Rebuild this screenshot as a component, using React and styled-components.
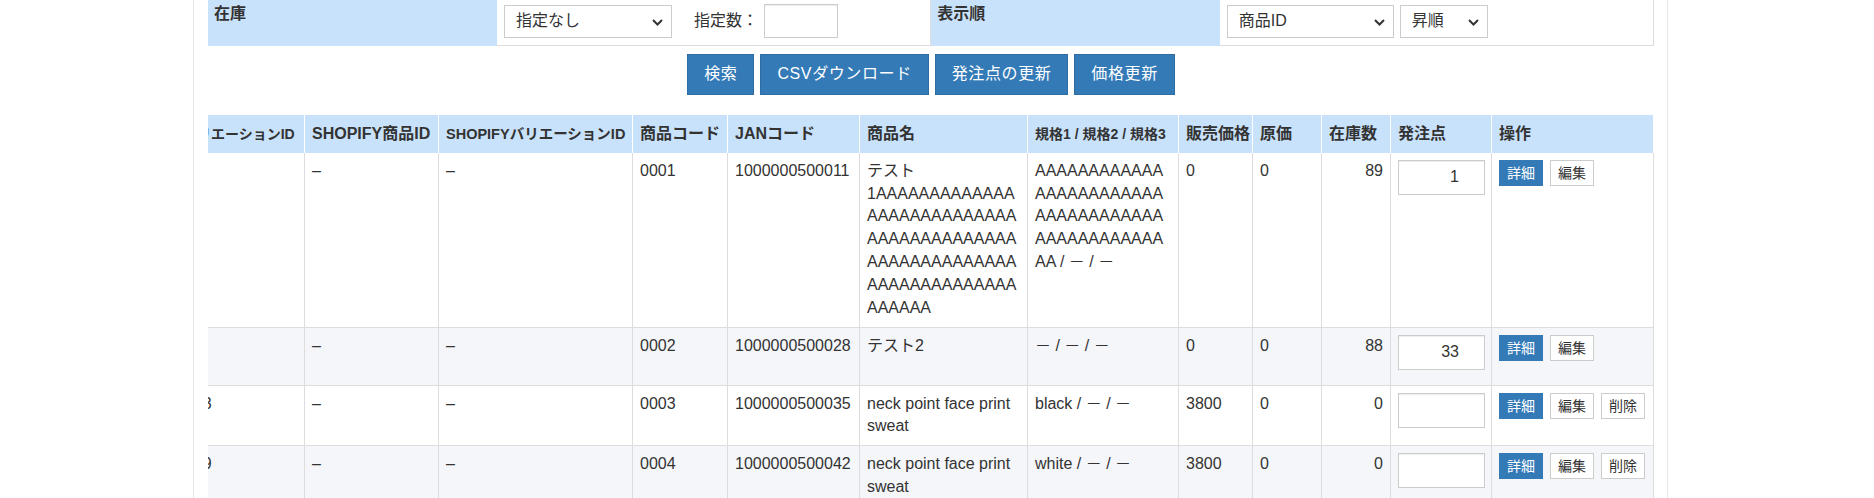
import React, { useLayoutEffect, useRef } from 'react';
import styled, { createGlobalStyle } from 'styled-components';

const GlobalStyle = createGlobalStyle`
	* { box-sizing: border-box; }
	html, body { margin: 0; padding: 0; background: #fff; }
	body {
		font-family: "Liberation Sans", Arial, "Noto Sans CJK JP", sans-serif;
		font-size: 16px;
		line-height: 1.42857;
		color: #333;
	}
`;

const Page = styled.div`
	width: 1475px;
	min-height: 520px;
	margin: -4px 0 0 193px;
	padding: 0 13px 40px 14px;
	border-left: 1px solid #e7e7e7;
	border-right: 1px solid #e7e7e7;
`;

const SearchTable = styled.table`
	width: 100%;
	table-layout: fixed;
	border-collapse: collapse;
`;

const SearchHead = styled.th`
	width: 20%;
	padding: 7px 6px;
	background: #c9e2fb;
	text-align: left;
	vertical-align: top;
	font-weight: bold;
`;

const SearchCell = styled.td`
	width: 30%;
	padding: 8px 7px 7px;
	border-right: 1px solid #ddd;
	border-bottom: 1px solid #ddd;
`;

const Field = styled.div`
	display: flex;
	align-items: center;
	gap: 6px;
`;

const SelectWrap = styled.span`
	position: relative;
	display: inline-block;
	width: ${p => p.$width}px;
	height: 33px;
`;

const Select = styled.select`
	appearance: none;
	width: 100%;
	height: 100%;
	padding: 0 28px 0 11px;
	border: 1px solid #ccc;
	border-radius: 0;
	background: #fff;
	color: #333;
	font: inherit;
`;

const Chevron = styled.svg`
	position: absolute;
	top: 14px;
	right: 9px;
	pointer-events: none;
`;

const Label = styled.span`
	margin-left: 16px;
	white-space: nowrap;
`;

const TextInput = styled.input`
	width: ${p => p.$width}px;
	height: 34px;
	padding: 0 6px;
	border: 1px solid #ccc;
	box-shadow: inset 0 1px 1px rgba(0, 0, 0, .075);
	font: inherit;
	color: #333;
	text-align: ${p => p.$align || 'left'};
`;

const Actions = styled.div`
	display: flex;
	justify-content: center;
	gap: 6px;
	margin: 8px 0 20px;
`;

const Button = styled.button`
	padding: 8px 16px;
	border: 1px solid #2e6da4;
	border-radius: 0;
	background: #337ab7;
	color: #fff;
	font: inherit;
	line-height: 1.42857;
	letter-spacing: 0.6px;
	white-space: nowrap;
`;

const Scroller = styled.div`
	width: 100%;
	overflow: hidden;
`;

const DataTable = styled.table`
	width: ${p => p.$width}px;
	table-layout: fixed;
	border-collapse: collapse;
`;

const Th = styled.th`
	padding: 8px 7px 7px ${p => p.$indent || 7}px;
	background: #c9e2fb;
	border-left: 1px solid #fff;
	border-right: 1px solid #fff;
	text-align: left;
	font-weight: bold;
	font-size: ${p => p.$size || 16}px;
	line-height: ${p => 22.86 / (p.$size || 16)};
	white-space: nowrap;
	overflow: hidden;
`;

const Row = styled.tr`
	background: ${p => (p.$striped ? '#f5f6f9' : '#fff')};
`;

const Td = styled.td`
	padding: 7px;
	border: 1px solid #ddd;
	border-top: ${p => (p.$first ? 'none' : '1px solid #ddd')};
	vertical-align: top;
	text-align: ${p => p.$align || 'left'};
	overflow-wrap: break-word;
`;

const PointInput = styled(TextInput)`
	display: block;
	height: 35px;
	margin-bottom: 8px;
	padding: 0 25px 0 6px;
`;

const Ops = styled.div`
	display: flex;
	gap: 7px;
`;

const SmallButton = styled.button`
	padding: 1px 7px;
	border: 1px solid ${p => (p.$primary ? '#337ab7' : '#ccc')};
	border-radius: 0;
	background: ${p => (p.$primary ? '#337ab7' : '#fff')};
	color: ${p => (p.$primary ? '#fff' : '#333')};
	font-family: inherit;
	font-size: 14px;
	line-height: 22px;
	white-space: nowrap;
`;

const columns = [
	{ label: 'ID', width: 60 },
	{ label: '商品ID', width: 83 },
	{ label: 'バリエーションID', width: 136, size: 14, indent: 14 },
	{ label: 'SHOPIFY商品ID', width: 134 },
	{ label: 'SHOPIFYバリエーションID', width: 194, size: 14.5 },
	{ label: '商品コード', width: 95 },
	{ label: 'JANコード', width: 132 },
	{ label: '商品名', width: 168 },
	{ label: '規格1 / 規格2 / 規格3', width: 151, size: 14 },
	{ label: '販売価格', width: 74 },
	{ label: '原価', width: 69 },
	{ label: '在庫数', width: 69 },
	{ label: '発注点', width: 101 },
	{ label: '操作', width: 162 },
];

const tableWidth = columns.reduce((sum, c) => sum + c.width, 0);

const rows = [
	{ id: '1', item: '1', variation: '–', code: '0001', jan: '1000000500011', name: 'テスト1' + 'A'.repeat(75), spec: 'A'.repeat(50) + ' / － / －', price: '0', cost: '0', stock: '89', point: '1', removable: false },
	{ id: '2', item: '2', variation: '–', code: '0002', jan: '1000000500028', name: 'テスト2', spec: '－ / － / －', price: '0', cost: '0', stock: '88', point: '33', removable: false },
	{ id: '3', item: '3', variation: '1003', code: '0003', jan: '1000000500035', name: 'neck point face print sweat', spec: 'black / － / －', price: '3800', cost: '0', stock: '0', point: '', removable: true },
	{ id: '4', item: '3', variation: '1009', code: '0004', jan: '1000000500042', name: 'neck point face print sweat', spec: 'white / － / －', price: '3800', cost: '0', stock: '0', point: '', removable: true },
];

const Dropdown = ({ width, options }) => (
	<SelectWrap $width={width}>
		<Select defaultValue={options[0]}>
			{options.map(o => <option key={o}>{o}</option>)}
		</Select>
		<Chevron width="11" height="7" viewBox="0 0 11 7">
			<path d="M1 1 L5.5 5.5 L10 1" fill="none" stroke="#333" strokeWidth="2" />
		</Chevron>
	</SelectWrap>
);

const App = () => {
	const scroller = useRef(null);

	useLayoutEffect(() => {
		const el = scroller.current;
		if (el) el.scrollLeft = el.scrollWidth - el.clientWidth;
	}, []);

	return (
		<>
			<GlobalStyle />
			<Page>
				<SearchTable>
					<tbody>
						<tr>
							<SearchHead>在庫</SearchHead>
							<SearchCell>
								<Field>
									<Dropdown width={168} options={['指定なし', '在庫あり', '在庫なし']} />
									<Label>指定数：</Label>
									<TextInput $width={74} />
								</Field>
							</SearchCell>
							<SearchHead>表示順</SearchHead>
							<SearchCell>
								<Field>
									<Dropdown width={167} options={['商品ID', '商品コード', '在庫数']} />
									<Dropdown width={88} options={['昇順', '降順']} />
								</Field>
							</SearchCell>
						</tr>
					</tbody>
				</SearchTable>

				<Actions>
					<Button>検索</Button>
					<Button>CSVダウンロード</Button>
					<Button>発注点の更新</Button>
					<Button>価格更新</Button>
				</Actions>

				<Scroller ref={scroller}>
					<DataTable $width={tableWidth}>
						<colgroup>
							{columns.map(c => <col key={c.label} style={{ width: c.width }} />)}
						</colgroup>
						<thead>
							<tr>
								{columns.map(c => (
									<Th key={c.label} $size={c.size} $indent={c.indent}>{c.label}</Th>
								))}
							</tr>
						</thead>
						<tbody>
							{rows.map((r, i) => (
								<Row key={r.code} $striped={i % 2 === 1}>
									<Td $first={i === 0}>{r.id}</Td>
									<Td $first={i === 0}>{r.item}</Td>
									<Td $first={i === 0}>{r.variation}</Td>
									<Td $first={i === 0}>–</Td>
									<Td $first={i === 0}>–</Td>
									<Td $first={i === 0}>{r.code}</Td>
									<Td $first={i === 0}>{r.jan}</Td>
									<Td $first={i === 0}>{r.name}</Td>
									<Td $first={i === 0}>{r.spec}</Td>
									<Td $first={i === 0}>{r.price}</Td>
									<Td $first={i === 0}>{r.cost}</Td>
									<Td $first={i === 0} $align="right">{r.stock}</Td>
									<Td $first={i === 0}>
										<PointInput $width={87} $align="right" defaultValue={r.point} />
									</Td>
									<Td $first={i === 0}>
										<Ops>
											<SmallButton $primary>詳細</SmallButton>
											<SmallButton>編集</SmallButton>
											{r.removable && <SmallButton>削除</SmallButton>}
										</Ops>
									</Td>
								</Row>
							))}
						</tbody>
					</DataTable>
				</Scroller>
			</Page>
		</>
	);
};

export default App;
